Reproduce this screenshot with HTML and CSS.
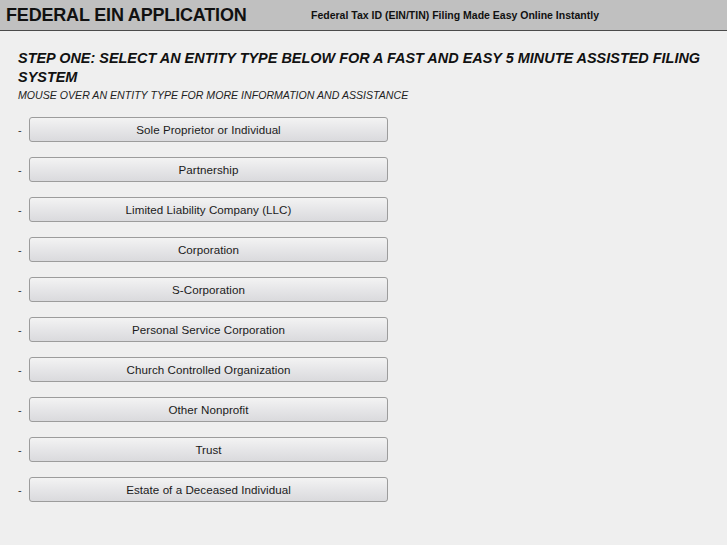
FILE: index.html
```html
<!DOCTYPE html>
<html>
<head>
<meta charset="utf-8">
<title>Federal EIN Application</title>
<link rel="stylesheet" href="styles.css">
</head>
<body>
<header class="topbar">
  <h1 class="title">FEDERAL EIN APPLICATION</h1>
  <p class="tagline">Federal Tax ID (EIN/TIN) Filing Made Easy Online Instantly</p>
</header>
<main class="content">
  <h2 class="step">STEP ONE: SELECT AN ENTITY TYPE BELOW FOR A FAST AND EASY 5 MINUTE ASSISTED FILING SYSTEM</h2>
  <p class="hint">MOUSE OVER AN ENTITY TYPE FOR MORE INFORMATION AND ASSISTANCE</p>
  <ul class="entities">
    <li class="entity"><span class="dash">-</span><button class="btn">Sole Proprietor or Individual</button></li>
    <li class="entity"><span class="dash">-</span><button class="btn">Partnership</button></li>
    <li class="entity"><span class="dash">-</span><button class="btn">Limited Liability Company (LLC)</button></li>
    <li class="entity"><span class="dash">-</span><button class="btn">Corporation</button></li>
    <li class="entity"><span class="dash">-</span><button class="btn">S-Corporation</button></li>
    <li class="entity"><span class="dash">-</span><button class="btn">Personal Service Corporation</button></li>
    <li class="entity"><span class="dash">-</span><button class="btn">Church Controlled Organization</button></li>
    <li class="entity"><span class="dash">-</span><button class="btn">Other Nonprofit</button></li>
    <li class="entity"><span class="dash">-</span><button class="btn">Trust</button></li>
    <li class="entity"><span class="dash">-</span><button class="btn">Estate of a Deceased Individual</button></li>
  </ul>
</main>
</body>
</html>
```
FILE: styles.css
```css
html, body {
  margin: 0;
  padding: 0;
  background: #efefef;
  font-family: "Liberation Sans", Arial, sans-serif;
  color: #111;
}

.topbar {
  display: flex;
  align-items: baseline;
  height: 30px;
  background: #c0c0c0;
  border-bottom: 1px solid #4a4a4a;
  box-sizing: content-box;
}

.title {
  margin: 0;
  padding-left: 6px;
  width: 305px;
  flex: none;
  font-size: 18px;
  font-weight: bold;
  letter-spacing: -0.18px;
  line-height: 31px;
  color: #111;
}

.tagline {
  margin: 0;
  font-size: 10.5px;
  font-weight: bold;
  color: #111;
  position: relative;
  top: -2px;
}

.content {
  padding: 0 18px;
}

.step {
  margin: 18px 0 0;
  font-size: 14.45px;
  font-weight: bold;
  font-style: italic;
  line-height: 19px;
  color: #111;
}

.hint {
  margin: 1px 0 0;
  font-size: 10.6px;
  font-style: italic;
  line-height: 14px;
  color: #222;
}

.entities {
  list-style: none;
  margin: 15px 0 0;
  padding: 0;
  display: flex;
  flex-direction: column;
  gap: 15px;
}

.entity {
  display: flex;
  align-items: center;
}

.dash {
  width: 11px;
  flex: none;
  font-size: 11px;
  color: #333;
}

.btn {
  width: 359px;
  height: 25px;
  padding: 0;
  border: 1px solid #9c9c9c;
  border-radius: 3px;
  background: linear-gradient(to bottom, #f3f3f3 0%, #e6e6e8 50%, #dadadd 100%);
  font-family: "Liberation Sans", Arial, sans-serif;
  font-size: 11.6px;
  letter-spacing: 0.05px;
  color: #1a1a1a;
  text-align: center;
  box-sizing: border-box;
}
```
